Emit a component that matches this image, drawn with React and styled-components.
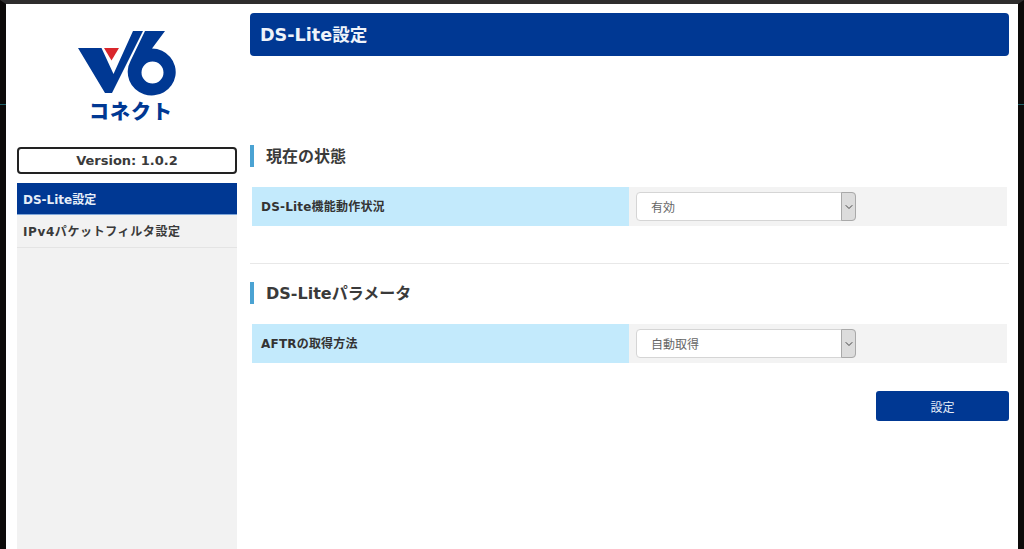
import React from "react"
import styled, { createGlobalStyle } from "styled-components"
import { ChevronDown } from "lucide-react"

const FONT = `"DejaVu Sans", "Noto Sans CJK JP", sans-serif`
const NAVY = "#003893"

const GlobalStyle = createGlobalStyle`
  html, body {
    margin: 0;
    height: 100%;
    overflow: hidden;
    background: #0c0a09;
  }
  * {
    box-sizing: border-box;
  }
`

const Logo = () => (
  <LogoWrap>
    <svg width="110" height="72" viewBox="72 28 110 72" aria-hidden="true">
      <path d="M78 48H101.5L113.5 74 133 31H143L112 93H105Z" fill={NAVY} />
      <path d="M104 48H119L111.5 60.5Z" fill="#d9262c" />
      <path
        d="M145 31H165L152 48.5A24 23.5 0 1 1 130.5 61ZM152.5 61.5A11 11 0 1 0 152.5 83.5 11 11 0 1 0 152.5 61.5Z"
        fill={NAVY}
        fillRule="evenodd"
      />
    </svg>
    <LogoText>コネクト</LogoText>
  </LogoWrap>
)

const SettingRow = ({ label, value }) => (
  <Row>
    <RowLabel>{label}</RowLabel>
    <RowField>
      <SelectWrap>
        <Select defaultValue={value}>
          <option>{value}</option>
        </Select>
        <SelectArrow>
          <ChevronDown size={12} strokeWidth={2} />
        </SelectArrow>
      </SelectWrap>
    </RowField>
  </Row>
)

const App = () => (
  <>
    <GlobalStyle />
    <Frame>
      <Tick $side="left" />
      <Tick $side="right" />
      <Sidebar>
        <Logo />
        <VersionBox>Version: 1.0.2</VersionBox>
        <Nav>
          <NavItem $active>DS-Lite設定</NavItem>
          <NavItem $spaced>IPv4パケットフィルタ設定</NavItem>
        </Nav>
      </Sidebar>

      <Main>
        <PageTitle>DS-Lite設定</PageTitle>

        <SectionTitle>現在の状態</SectionTitle>
        <SettingRow label="DS-Lite機能動作状況" value="有効" />

        <Divider />

        <SectionTitle $compact>DS-Liteパラメータ</SectionTitle>
        <SettingRow label="AFTRの取得方法" value="自動取得" />

        <Actions>
          <SubmitButton>設定</SubmitButton>
        </Actions>
      </Main>
    </Frame>
  </>
)

export default App

const Frame = styled.div`
  position: relative;
  display: flex;
  height: 100vh;
  border-top: 4px solid #2e2d2d;
  border-left: 6px solid #0c0a09;
  border-right: 6px solid #0c0a09;
  background: #fff;
  font-family: ${FONT};
  color: #333;
`

const Tick = styled.div`
  position: absolute;
  top: 100px;
  ${props => props.$side}: -6px;
  width: 6px;
  height: 1px;
  background: #1f5f66;
`

const Sidebar = styled.aside`
  width: 220px;
  margin-left: 11px;
  display: flex;
  flex-direction: column;
  flex-shrink: 0;
`

const LogoWrap = styled.div`
  height: 143px;
  padding-top: 24px;
  display: flex;
  flex-direction: column;
  align-items: center;

  svg {
    display: block;
    margin-left: -1px;
  }
`

const LogoText = styled.div`
  margin: 0 0 0 8px;
  font-family: "Noto Sans CJK JP", sans-serif;
  font-weight: 900;
  font-size: 20px;
  line-height: 22px;
  letter-spacing: 1px;
  color: ${NAVY};
`

const VersionBox = styled.div`
  height: 27px;
  border: 2px solid #222;
  border-radius: 4px;
  font-size: 13px;
  font-weight: 700;
  line-height: 23px;
  text-align: center;
  color: #3a3a3a;
`

const Nav = styled.nav`
  flex: 1;
  margin-top: 9px;
  background: #f2f2f2;
`

const NavItem = styled.div`
  height: ${props => (props.$active ? "32px" : "33px")};
  padding: 1px 0 0 6px;
  font-size: 12px;
  font-weight: 700;
  line-height: 32px;
  letter-spacing: ${props => (props.$spaced ? "0.6px" : "0")};
  color: ${props => (props.$active ? "#e6eef8" : "#3a3a3a")};
  background: ${props => (props.$active ? NAVY : "transparent")};
  border-bottom: 1px solid ${props => (props.$active ? "#7fa6d8" : "#e4e4e4")};
`

const Main = styled.main`
  width: 759px;
  margin-left: 13px;
  padding-top: 9px;
`

const PageTitle = styled.h1`
  margin: 0;
  height: 43px;
  padding: 1px 0 0 10px;
  border-radius: 4px;
  background: ${NAVY};
  color: #eef3fa;
  font-size: 17.6px;
  font-weight: 700;
  line-height: 43px;
`

const SectionTitle = styled.h2`
  margin: ${props => (props.$compact ? "18px" : "89px")} 0 20px;
  height: 22px;
  padding-left: 12px;
  border-left: 4px solid #4ba3d3;
  font-size: 16px;
  font-weight: 700;
  line-height: 23px;
  color: #3a3a3a;
`

const Row = styled.div`
  display: flex;
  height: 39px;
  margin: 0 2px;
  background: #f3f3f3;
`

const RowLabel = styled.div`
  width: 377px;
  padding: 1px 0 0 9px;
  background: #c3eafc;
  font-size: 12px;
  font-weight: 700;
  line-height: 39px;
  letter-spacing: 0.2px;
  color: #333;
`

const RowField = styled.div`
  flex: 1;
  padding: 5px 0 0 7px;
`

const SelectWrap = styled.div`
  position: relative;
  width: 220px;
  height: 29px;
`

const Select = styled.select`
  appearance: none;
  display: block;
  width: 100%;
  height: 100%;
  padding: 2px 0 0 14px;
  border: 1px solid #d5d5d5;
  border-radius: 4px;
  background: #fff;
  font-family: ${FONT};
  font-size: 12px;
  color: #666;
`

const SelectArrow = styled.div`
  position: absolute;
  top: 0;
  right: 0;
  width: 15px;
  height: 100%;
  display: flex;
  align-items: center;
  justify-content: center;
  border: 1px solid #a9a9a9;
  border-radius: 0 4px 4px 0;
  background: #dcdcdc;
  color: #444;
  pointer-events: none;
`

const Divider = styled.hr`
  margin: 37px 0 0;
  border: 0;
  border-top: 1px solid #e8e8e8;
`

const Actions = styled.div`
  display: flex;
  justify-content: flex-end;
  margin-top: 28px;
`

const SubmitButton = styled.button`
  width: 133px;
  height: 30px;
  border: 0;
  border-radius: 3px;
  background: ${NAVY};
  color: #e6eef8;
  font-family: ${FONT};
  font-size: 12px;
`
